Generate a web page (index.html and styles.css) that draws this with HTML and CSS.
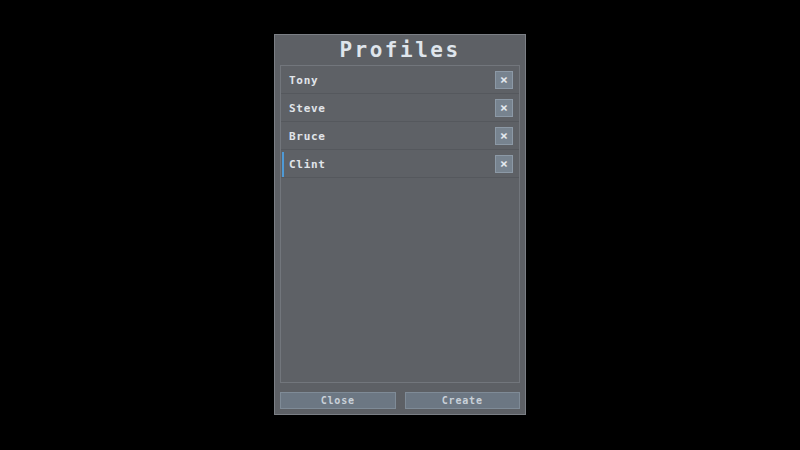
FILE: index.html
```html
<!DOCTYPE html>
<html lang="en">
<head>
  <meta charset="UTF-8" />
  <title>Profiles</title>
  <link rel="stylesheet" href="styles.css">
</head>
<body>
  <div class="panel">
    <h2 class="title">Profiles</h2>
    <div class="profile-list">
      <div class="profile-item">
        <span>Tony</span>
        <button class="remove-btn">×</button>
      </div>
      <div class="profile-item">
        <span>Steve</span>
        <button class="remove-btn">×</button>
      </div>
      <div class="profile-item">
        <span>Bruce</span>
        <button class="remove-btn">×</button>
      </div>
      <div class="profile-item selected">
        <span>Clint</span>
        <button class="remove-btn">×</button>
      </div>
    </div>
    <div class="actions">
      <button class="action-btn">Close</button>
      <button class="action-btn">Create</button>
    </div>
  </div>
</body>
</html>
```

FILE: styles.css
```css
body {
  margin: 0;
  background-color: #000;
  font-family: "DejaVu Sans Mono", monospace;
  display: flex;
  justify-content: center;
  align-items: flex-start;
  height: 100vh;
  padding-top: 34px;
  box-sizing: border-box;
}
.panel {
  width: 252px;
  height: 381px;
  box-sizing: border-box;
  border: 1px solid #7b7f85;
  background-color: #5d6065;
  padding: 0 5px 5px;
  display: flex;
  flex-direction: column;
}
.title {
  margin: 0;
  height: 30px;
  line-height: 31px;
  text-align: center;
  font-size: 21px;
  font-weight: bold;
  letter-spacing: 2.5px;
  color: #dfe5ec;
}
.profile-list {
  flex: 1;
  border: 1px solid #72767c;
  background-color: #5e6166;
}
.profile-item {
  height: 27px;
  border-bottom: 1px solid #55585d;
  display: flex;
  align-items: center;
  justify-content: space-between;
  padding: 0 6px 0 8px;
  font-size: 11px;
  font-weight: bold;
  letter-spacing: 0.7px;
  color: #e1e5ea;
  position: relative;
}
.profile-item span {
  padding-top: 2px;
}
.profile-item.selected::before {
  content: "";
  position: absolute;
  left: 1px;
  top: 2px;
  bottom: 0;
  width: 2px;
  background-color: #4f9ad6;
}
.remove-btn {
  width: 18px;
  height: 18px;
  padding: 0;
  border: 1px solid #8c99a6;
  background-color: #77838f;
  color: #e4e9ee;
  font-family: inherit;
  font-size: 13px;
  font-weight: bold;
  line-height: 15px;
  cursor: pointer;
}
.actions {
  display: flex;
  gap: 9px;
  margin-top: 9px;
}
.action-btn {
  flex: 1;
  height: 17px;
  padding: 0;
  border: 1px solid #7f8b97;
  background-color: #6c7783;
  color: #c9d1d9;
  font-family: inherit;
  font-size: 10px;
  font-weight: bold;
  letter-spacing: 0.8px;
  cursor: pointer;
}
```
